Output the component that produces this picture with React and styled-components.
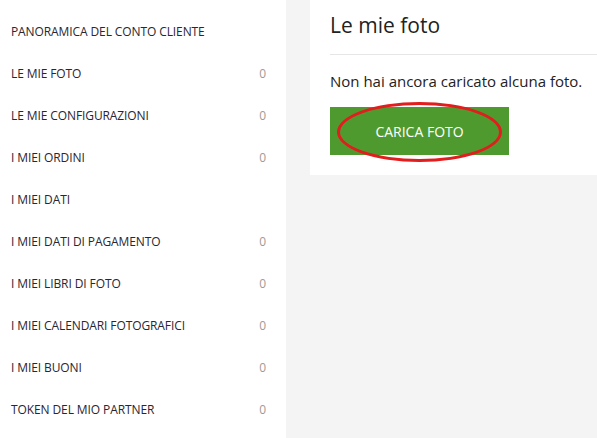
import React from "react"
import styled, { createGlobalStyle } from "styled-components"

const GlobalStyle = createGlobalStyle`
  html, body {
    margin: 0;
    padding: 0;
    background: #f4f4f4;
    font-family: "Open Sans", "Noto Sans", sans-serif;
  }
`

const menu = [
  { label: "Panoramica del conto cliente" },
  { label: "Le mie foto", count: 0 },
  { label: "Le mie configurazioni", count: 0 },
  { label: "I miei ordini", count: 0 },
  { label: "I miei dati" },
  { label: "I miei dati di pagamento", count: 0 },
  { label: "I miei libri di foto", count: 0 },
  { label: "I miei calendari fotografici", count: 0 },
  { label: "I miei buoni", count: 0 },
  { label: "Token del mio partner", count: 0 },
]

const App = () => {
  return (
    <Page>
      <GlobalStyle />
      <Sidebar>
        {menu.map(item => (
          <Row key={item.label}>
            <Label>{item.label}</Label>
            {item.count !== undefined && <Count>{item.count}</Count>}
          </Row>
        ))}
      </Sidebar>
      <Main>
        <Card>
          <Title>Le mie foto</Title>
          <Divider />
          <Text>Non hai ancora caricato alcuna foto.</Text>
          <Button>
            CARICA FOTO
            <Mark />
          </Button>
        </Card>
      </Main>
    </Page>
  )
}
export default App

const Page = styled.div`
  display: flex;
  min-height: 438px;
`
const Sidebar = styled.nav`
  width: 286px;
  flex-shrink: 0;
  background: #fff;
  padding-top: 10px;
  box-sizing: border-box;
`
const Row = styled.div`
  height: 42px;
  display: flex;
  align-items: center;
  justify-content: space-between;
  padding: 0 20px 0 11px;
`
const Label = styled.span`
  font-size: 12px;
  text-transform: uppercase;
  color: #2a2630;
  letter-spacing: -0.1px;
`
const Count = styled.span`
  font-size: 12px;
  color: #a09a94;
`
const Main = styled.main`
  flex: 1;
  padding-left: 24px;
  align-self: flex-start;
`
const Card = styled.section`
  background: #fff;
  height: 175px;
  padding-left: 20px;
  box-sizing: border-box;
  overflow: hidden;
`
const Title = styled.h1`
  margin: 0;
  padding-top: 10px;
  height: 54px;
  box-sizing: border-box;
  font-size: 21px;
  font-weight: normal;
  color: #222;
  line-height: 30px;
`
const Divider = styled.hr`
  margin: 0;
  border: 0;
  border-top: 1px solid #e6e6e6;
`
const Text = styled.p`
  margin: 15px 0 0;
  font-size: 15px;
  color: #222;
  line-height: 22px;
  white-space: nowrap;
`
const Button = styled.button`
  position: relative;
  display: block;
  margin-top: 15px;
  width: 179px;
  height: 48px;
  border: 0;
  background: #4f9a2f;
  color: #fff;
  font-family: "Open Sans", "Noto Sans", sans-serif;
  font-size: 14px;
  padding: 0;
`
const Mark = styled.span`
  position: absolute;
  left: 7px;
  top: -5px;
  width: 165px;
  height: 60px;
  border: 3px solid #e21d1d;
  border-radius: 50%;
  box-sizing: border-box;
`
